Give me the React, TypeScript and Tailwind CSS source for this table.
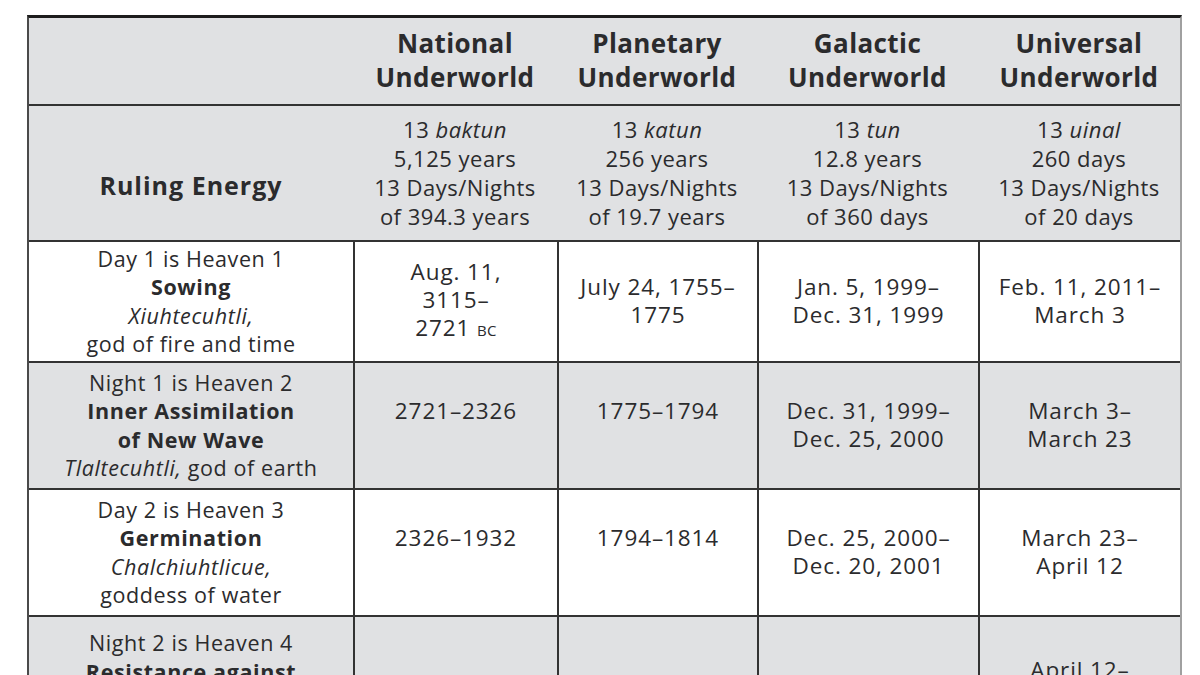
import React from 'react';

const cols = 'grid grid-cols-[324px_204px_200px_221px_202px]';
const gray = 'bg-[#e0e1e3]';
const rule = 'border-l-2 border-l-[#333]';
const dateText = 'text-[22.5px] leading-[28px] tracking-[0.9px]';

const headers = ['National', 'Planetary', 'Galactic', 'Universal'];

const spans = [
  { unit: 'baktun', len: '5,125 years', per: 'of 394.3 years' },
  { unit: 'katun', len: '256 years', per: 'of 19.7 years' },
  { unit: 'tun', len: '12.8 years', per: 'of 360 days' },
  { unit: 'uinal', len: '260 days', per: 'of 20 days' },
];

type Row = {
  label: string;
  name: string[];
  god: React.ReactNode;
  dates: React.ReactNode[];
  shade: boolean;
  h: string;
};

const rows: Row[] = [
  {
    label: 'Day 1 is Heaven 1',
    name: ['Sowing'],
    god: (
      <>
        <i>Xiuhtecuhtli,</i>
        <br />
        god of fire and time
      </>
    ),
    dates: [
      <>
        Aug. 11,
        <br />
        3115–
        <br />
        2721 <span className="text-[15px] tracking-wide">BC</span>
      </>,
      <>
        July 24, 1755–
        <br />
        1775
      </>,
      <>
        Jan. 5, 1999–
        <br />
        Dec. 31, 1999
      </>,
      <>
        Feb. 11, 2011–
        <br />
        March 3
      </>,
    ],
    shade: false,
    h: 'h-[121px]',
  },
  {
    label: 'Night 1 is Heaven 2',
    name: ['Inner Assimilation', 'of New Wave'],
    god: (
      <>
        <i>Tlaltecuhtli,</i> god of earth
      </>
    ),
    dates: [
      '2721–2326',
      '1775–1794',
      <>
        Dec. 31, 1999–
        <br />
        Dec. 25, 2000
      </>,
      <>
        March 3–
        <br />
        March 23
      </>,
    ],
    shade: true,
    h: 'h-[127px]',
  },
  {
    label: 'Day 2 is Heaven 3',
    name: ['Germination'],
    god: (
      <>
        <i>Chalchiuhtlicue,</i>
        <br />
        goddess of water
      </>
    ),
    dates: [
      '2326–1932',
      '1794–1814',
      <>
        Dec. 25, 2000–
        <br />
        Dec. 20, 2001
      </>,
      <>
        March 23–
        <br />
        April 12
      </>,
    ],
    shade: false,
    h: 'h-[127px]',
  },
];

export default function App() {
  return (
    <div className="w-[1200px] h-[675px] overflow-hidden bg-white pt-[15px] pl-[27px] font-['Open_Sans','Lato',sans-serif] text-[#2b2b2d]">
      <div className="w-[1155px] border-t-[3px] border-t-[#1c1c1c] border-l-2 border-l-[#4a4a4a] border-r-2 border-r-[#a0a0a0]">
        {/* header */}
        <div className={`${cols} ${gray} h-[88px] border-b-2 border-b-[#333]`}>
          <div />
          {headers.map((h) => (
            <div key={h} className="flex flex-col items-center justify-center text-[26px] font-bold leading-[34px] tracking-[0.4px] pb-[2px]">
              <span>{h}</span>
              <span>Underworld</span>
            </div>
          ))}
        </div>

        {/* ruling energy */}
        <div className={`${cols} ${gray} h-[136px] border-b-2 border-b-[#333]`}>
          <div className="flex items-center justify-center text-[25px] font-bold tracking-[1px] pt-[26px]">Ruling Energy</div>
          {spans.map((s) => (
            <div key={s.unit} className="flex flex-col items-center justify-center text-center text-[22px] leading-[29px] tracking-[0.5px]">
              <span>
                13 <i>{s.unit}</i>
              </span>
              <span>{s.len}</span>
              <span>13 Days/Nights</span>
              <span>{s.per}</span>
            </div>
          ))}
        </div>

        {/* body rows */}
        {rows.map((r) => (
          <div key={r.label} className={`${cols} ${r.shade ? gray : 'bg-white'} ${r.h} border-b-2 border-b-[#333]`}>
            <div className="flex flex-col items-center justify-center text-center text-[21.5px] leading-[28.5px] tracking-[0.6px]">
              <span>{r.label}</span>
              {r.name.map((n) => (
                <span key={n} className="font-bold">
                  {n}
                </span>
              ))}
              <span>{r.god}</span>
            </div>
            {r.dates.map((d, i) => (
              <div key={i} className={`${rule} flex items-center justify-center text-center ${dateText}`}>
                <div className="min-h-[56px] mb-[2px]">{d}</div>
              </div>
            ))}
          </div>
        ))}

        {/* partly visible row */}
        <div className={`${cols} ${gray} h-[170px]`}>
          <div className="flex flex-col items-center text-center text-[21.5px] leading-[28.5px] tracking-[0.6px] pt-[12px]">
            <span>Night 2 is Heaven 4</span>
            <span className="font-bold">Resistance against</span>
            <span className="font-bold">the New Wave</span>
            <span>
              <i>Tonatiuh,</i> god of the sun
            </span>
          </div>
          <div className={`${rule} flex items-center justify-center ${dateText} pt-[40px]`}>1932–1538</div>
          <div className={`${rule} flex items-center justify-center ${dateText} pt-[40px]`}>1814–1834</div>
          <div className={`${rule} flex items-center justify-center text-center ${dateText} pt-[60px]`}>
            <div>
              Dec. 20, 2001–
              <br />
              Dec. 15, 2002
            </div>
          </div>
          <div className={`${rule} flex flex-col items-center text-center ${dateText} pt-[39px]`}>
            <span>April 12–</span>
            <span>May 2</span>
          </div>
        </div>
      </div>
    </div>
  );
}
